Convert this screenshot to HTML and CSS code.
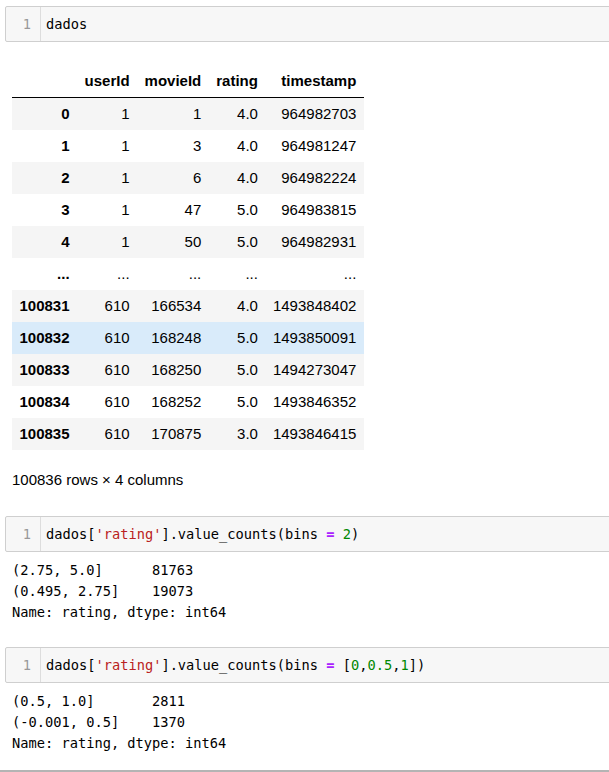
FILE: index.html
```html
<!DOCTYPE html>
<html>
<head>
<meta charset="utf-8">
<link rel="stylesheet" href="styles.css">
</head>
<body>
<div class="nb">
  <div class="cell">
    <div class="input"><div class="gutter">1</div><div class="code"><span class="line">dados</span></div></div>
    <div class="output">
      <table class="df">
        <thead>
          <tr><th></th><th>userId</th><th>movieId</th><th>rating</th><th>timestamp</th></tr>
        </thead>
        <tbody>
          <tr><th>0</th><td>1</td><td>1</td><td>4.0</td><td>964982703</td></tr>
          <tr><th>1</th><td>1</td><td>3</td><td>4.0</td><td>964981247</td></tr>
          <tr><th>2</th><td>1</td><td>6</td><td>4.0</td><td>964982224</td></tr>
          <tr><th>3</th><td>1</td><td>47</td><td>5.0</td><td>964983815</td></tr>
          <tr><th>4</th><td>1</td><td>50</td><td>5.0</td><td>964982931</td></tr>
          <tr><th>...</th><td>...</td><td>...</td><td>...</td><td>...</td></tr>
          <tr><th>100831</th><td>610</td><td>166534</td><td>4.0</td><td>1493848402</td></tr>
          <tr class="hover"><th>100832</th><td>610</td><td>168248</td><td>5.0</td><td>1493850091</td></tr>
          <tr><th>100833</th><td>610</td><td>168250</td><td>5.0</td><td>1494273047</td></tr>
          <tr><th>100834</th><td>610</td><td>168252</td><td>5.0</td><td>1493846352</td></tr>
          <tr><th>100835</th><td>610</td><td>170875</td><td>3.0</td><td>1493846415</td></tr>
        </tbody>
      </table>
      <p class="shape">100836 rows × 4 columns</p>
    </div>
  </div>

  <div class="cell cell2">
    <div class="input"><div class="gutter">1</div><div class="code"><span class="line">dados[<span class="s">'rating'</span>].value_counts(bins <span class="o">=</span> <span class="n">2</span>)</span></div></div>
    <pre class="out">(2.75, 5.0]      81763
(0.495, 2.75]    19073
Name: rating, dtype: int64</pre>
  </div>

  <div class="cell cell3">
    <div class="input"><div class="gutter">1</div><div class="code"><span class="line">dados[<span class="s">'rating'</span>].value_counts(bins <span class="o">=</span> [<span class="n">0</span>,<span class="n">0.5</span>,<span class="n">1</span>])</span></div></div>
    <pre class="out">(0.5, 1.0]       2811
(-0.001, 0.5]    1370
Name: rating, dtype: int64</pre>
  </div>
  <div class="endline"></div>
</div>
</body>
</html>
```

FILE: styles.css
```css
html, body {
  margin: 0;
  padding: 0;
  background: #fff;
  overflow: hidden;
}

body {
  font-family: "Liberation Sans", Arial, sans-serif;
  color: #000;
}

.nb {
  padding: 6px 0 0 5px;
  width: 640px;
}

.input {
  display: flex;
  height: 36px;
  box-sizing: border-box;
  border: 1px solid #cfcfcf;
  border-radius: 2px;
  background: #f7f7f7;
  font-family: "DejaVu Sans Mono", "Liberation Mono", monospace;
  font-size: 13.7px;
  align-items: stretch;
}

.gutter {
  width: 35px;
  box-sizing: border-box;
  border-right: 1px solid #dddddd;
  color: #999999;
  text-align: right;
  padding-right: 9px;
  display: flex;
  align-items: center;
  justify-content: flex-end;
}

.code {
  padding-left: 5px;
  display: flex;
  align-items: center;
  color: #000;
}

.line {
  white-space: pre;
}

.s { color: #ba2121; }
.o { color: #aa22ff; font-weight: bold; }
.n { color: #008800; }

.output {
  padding-left: 7px;
}

.df {
  margin-top: 23px;
  border-collapse: separate;
  border-spacing: 0;
  font-size: 15px;
}

.df th,
.df td {
  padding: 0 7.5px;
  line-height: 32px;
  text-align: right;
  white-space: nowrap;
}

.df thead th {
  border-bottom: 1px solid #000;
  font-weight: bold;
}

.df tbody th {
  font-weight: bold;
}

.df tbody tr:nth-child(odd) {
  background: #f5f5f5;
}

.df tbody tr.hover {
  background: #d9ebfa;
}

.shape {
  margin: 20px 0 0 0;
  font-size: 15px;
  line-height: 20px;
}

.cell2 {
  margin-top: 26px;
}

.cell3 {
  margin-top: 24px;
}

.out {
  margin: 8px 0 0 0;
  padding-left: 7px;
  font-family: "DejaVu Sans Mono", "Liberation Mono", monospace;
  font-size: 13.7px;
  line-height: 21px;
  color: #000;
}

.endline {
  margin: 16px 0 0 -5px;
  border-top: 2px solid #b4b4b4;
}
```
